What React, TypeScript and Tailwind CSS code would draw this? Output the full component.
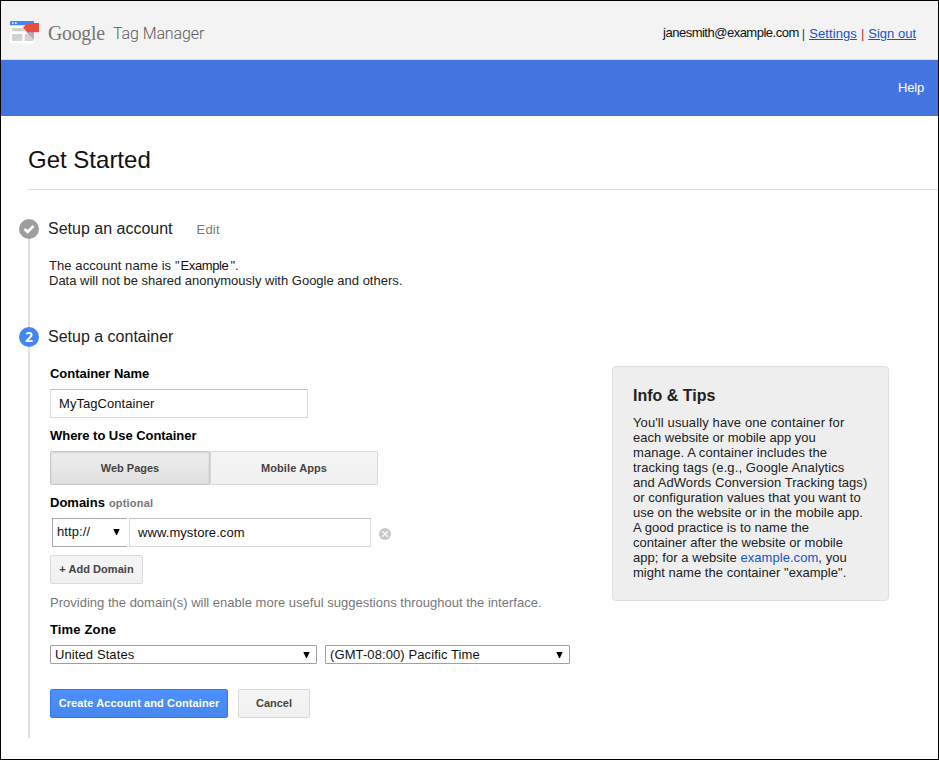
import React from "react";

const label = "h-[15px] text-[13px] leading-[15px] font-bold text-black whitespace-nowrap";
const grayButton =
  "rounded-[2px] border border-[#d9d9d9] bg-linear-to-b from-[#f5f5f5] to-[#f0f0f0] text-[11px] font-bold text-[#444] whitespace-nowrap";

function TagManagerIcon() {
  return (
    <svg width="31" height="24" viewBox="0 0 31 24" className="block shrink-0">
      <rect x="0" y="1" width="24.500" height="22.600" rx="1.500" fill="#fff" />
      <path d="M0 5.200V2Q0 1 1 1H23Q24 1 24 2V5.200Z" fill="#4285f4" />
      <path d="M2 2.300h1.700v1.700H2zM5 2.300h1.700v1.700H5z" fill="#e3edfe" />
      <path d="M2 8h11l3 3.300H2zM2 14h10.300v7H2zM14.700 14H23.500v7h-8.800z" fill="#d2d2d2" />
      <path d="M16 12 24 19.500V12Z" fill="#b0b0b0" />
      <path d="M13 7.500 17.500 3H29V12.200H17Z" fill="#e94e43" />
    </svg>
  );
}

function CheckCircle() {
  return (
    <svg width="20" height="20" viewBox="0 0 20 20" className="block shrink-0">
      <circle cx="10" cy="10" r="10" fill="#9e9e9e" />
      <path d="M5.500 10 8.600 12.900 14.500 6.900" fill="none" stroke="#fff" strokeWidth="2.800" />
    </svg>
  );
}

function RemoveIcon() {
  return (
    <svg width="12" height="12" viewBox="0 0 12 12" className="block">
      <circle cx="6" cy="6" r="6" fill="#c8c8c8" />
      <path d="M3.200 3.200l5.600 5.600M8.800 3.200l-5.600 5.600" stroke="#fff" strokeWidth="1.200" />
    </svg>
  );
}

function Arrow() {
  return (
    <svg width="7" height="6" viewBox="0 0 7 6" className="block">
      <path d="M0.300 0H6.700L3.900 6H3.100Z" fill="#000" />
    </svg>
  );
}

const tips = [
  { text: "You'll usually have one container for", cls: "tracking-[0.11px]" },
  { text: "each website or mobile app you", cls: "tracking-normal" },
  { text: "manage. A container includes the", cls: "tracking-[0.08px]" },
  { text: "tracking tags (e.g., Google Analytics", cls: "tracking-[0.11px]" },
  { text: "and AdWords Conversion Tracking tags)", cls: "tracking-[0.05px]" },
  { text: "or configuration values that you want to", cls: "tracking-[0.04px]" },
  { text: "use on the website or in the mobile app.", cls: "tracking-normal" },
  { text: "A good practice is to name the", cls: "tracking-[0.04px]" },
  { text: "container after the website or mobile", cls: "tracking-[0.01px]" },
];

function Header() {
  return (
    <header className="flex h-[59px] items-start justify-between border-b border-[#dcdcdc] bg-[#f3f3f3] pl-[9px] pr-[22px]">
      <div className="flex">
        <div className="pt-[19px]">
          <TagManagerIcon />
        </div>
        <span className="ml-[7px] mt-[18px] w-[58px] origin-left scale-x-[0.9] whitespace-nowrap font-['Liberation_Serif',serif] text-[22px] leading-[28px] tracking-[-0.3px] text-[#757575]">
          Google
        </span>
        <span className="ml-[7px] mt-[22px] whitespace-nowrap font-[Roboto,sans-serif] text-[16px] font-light leading-[22px] tracking-[-0.1px] text-[#5c5c5c]">
          Tag Manager
        </span>
      </div>
      <div className="mt-[25px] flex whitespace-pre text-[13px] leading-[15px]">
        <span className="-mt-px tracking-[-0.5px] text-[#111]">janesmith@example.com</span>
        <span className="ml-[3px] text-[#444]">|</span>
        <a className="ml-[4px] tracking-[0.1px] text-[#15c] underline">Settings</a>
        <span className="ml-[4px] text-[#a33]">|</span>
        <a className="ml-[4px] text-[#15c] underline">Sign out</a>
      </div>
    </header>
  );
}

function ContainerForm() {
  return (
    <div className="flex w-[562px] flex-col items-start pb-[20px] pt-[19px]">
      <div className={`tracking-[-0.04px] ${label}`}>Container Name</div>
      <div className="mt-2 flex h-[29px] w-[258px] items-center border border-[#d9d9d9] border-t-[#c0c0c0] px-2 text-[13px] tracking-[0.05px] text-[#111]">
        MyTagContainer
      </div>
      <div className={`mt-[10px] tracking-[-0.04px] ${label}`}>Where to Use Container</div>
      <div className="mt-2 flex h-[34px]">
        <button className="w-[160px] rounded-l-[2px] border border-[#c8c8c8] bg-linear-to-b from-[#eee] to-[#e0e0e0] text-[11px] font-bold text-[#444] shadow-[inset_0_1px_2px_rgba(0,0,0,0.1)]">
          Web Pages
        </button>
        <button className={`w-[168px] tracking-[0.1px] ${grayButton}`}>Mobile Apps</button>
      </div>
      <div className={`mt-[10px] flex ${label}`}>
        Domains
        <span className="ml-1 text-[11px] leading-[17px] tracking-[0.2px] text-[#777]">optional</span>
      </div>
      <div className="mt-2 flex h-[29px] pl-[2px]">
        <div className="flex w-[75px] items-center justify-between border border-r-0 border-[#a9a9a9] pb-[2px] pl-1 pr-[7px] text-[13px] tracking-[0.1px] text-[#111]">
          http://
          <Arrow />
        </div>
        <div className="ml-[2px] flex w-[242px] items-center border border-[#d9d9d9] border-t-[#c0c0c0] px-2 text-[13px] tracking-[0.08px] text-[#111]">
          www.mystore.com
        </div>
        <div className="ml-2 mt-[10px]">
          <RemoveIcon />
        </div>
      </div>
      <button className={`mt-2 h-[29px] w-[93px] tracking-[0.06px] ${grayButton}`}>+ Add Domain</button>
      <div className="mt-[11px] whitespace-nowrap text-[13px] leading-[15px] tracking-[0.01px] text-[#777]">
        Providing the domain(s) will enable more useful suggestions throughout the interface.
      </div>
      <div className={`mt-[12px] tracking-[0.15px] ${label}`}>Time Zone</div>
      <div className="mt-2 flex gap-2 text-[13px] leading-[15px] tracking-[0.1px] text-[#111]">
        <div className="flex h-[19px] w-[267px] items-center justify-between rounded-[1px] border border-[#a0a0a0] pl-1 pr-[6px]">
          United States
          <Arrow />
        </div>
        <div className="flex h-[19px] w-[245px] items-center justify-between rounded-[1px] border border-[#a0a0a0] pl-1 pr-[6px]">
          (GMT-08:00) Pacific Time
          <Arrow />
        </div>
      </div>
      <div className="mt-[25px] flex h-[29px] gap-[10px]">
        <button className="w-[178px] whitespace-nowrap rounded-[2px] border border-[#3079ed] bg-linear-to-b from-[#4d90fe] to-[#4787ed] text-[11px] font-bold tracking-[0.1px] text-white">
          Create Account and Container
        </button>
        <button className={`w-[72px] ${grayButton}`}>Cancel</button>
      </div>
    </div>
  );
}

export default function App() {
  return (
    <div className="h-[760px] w-[939px] overflow-hidden border border-black bg-white font-['Liberation_Sans',Arial,sans-serif]">
      <Header />
      <nav className="flex h-[56px] items-center justify-end bg-[#4374e0] pr-[14px] text-[13px] tracking-[-0.2px] text-white">
        Help
      </nav>
      <h1 className="ml-[27px] h-[74px] border-b border-[#e0e0e0] pt-[30px] text-[24px] leading-[28px] text-[#111]">
        Get Started
      </h1>
      <section className="mt-[29px] flex h-[108px] pl-[18px]">
        <div className="flex w-5 flex-col items-center">
          <CheckCircle />
          <div className="w-[2px] flex-1 bg-[#e0e0e0]" />
        </div>
        <div className="pl-[9px]">
          <div className="flex h-5 items-center whitespace-nowrap text-[16px] text-[#222]">
            Setup an account
            <a className="ml-6 pt-px text-[13px] tracking-[0.2px] text-[#777]">Edit</a>
          </div>
          <div className="ml-px mt-[19px] whitespace-nowrap text-[13px] leading-[15px] text-[#222]">
            <div className="flex">
              <span className="tracking-[0.08px]">The account name is "</span>
              <span className="ml-px tracking-[-0.4px] text-[#111]">Example</span>
              <span className="ml-[2px]">".</span>
            </div>
            <div>Data will not be shared anonymously with Google and others.</div>
          </div>
        </div>
      </section>
      <section className="flex h-[411px] pl-[18px]">
        <div className="flex w-5 shrink-0 flex-col items-center">
          <div className="flex size-5 shrink-0 items-center justify-center rounded-full bg-[#4285f4] pb-px font-['Open_Sans',sans-serif] text-[14px] font-bold leading-5 text-white">
            2
          </div>
          <div className="w-[2px] flex-1 bg-[#e0e0e0]" />
        </div>
        <div className="pl-[9px]">
          <div className="flex h-5 items-center text-[16px] text-[#222]">Setup a container</div>
          <div className="flex items-start pl-[2px]">
            <ContainerForm />
            <aside className="mt-[19px] h-[235px] w-[277px] rounded-[4px] border border-[#e0e0e0] bg-[#eee] px-5 pt-[19px] text-[13px] leading-[15px] text-[#222]">
              <h2 className="text-[16px] font-bold leading-[20px]">Info &amp; Tips</h2>
              <div className="mt-[9px] whitespace-nowrap">
                {tips.map((t) => (
                  <div key={t.text} className={t.cls}>
                    {t.text}
                  </div>
                ))}
                <div className="tracking-[0.06px]">
                  app; for a website <a className="text-[#15c]">example.com</a>, you
                </div>
                <div className="tracking-[0.03px]">might name the container "example".</div>
              </div>
            </aside>
          </div>
        </div>
      </section>
    </div>
  );
}
